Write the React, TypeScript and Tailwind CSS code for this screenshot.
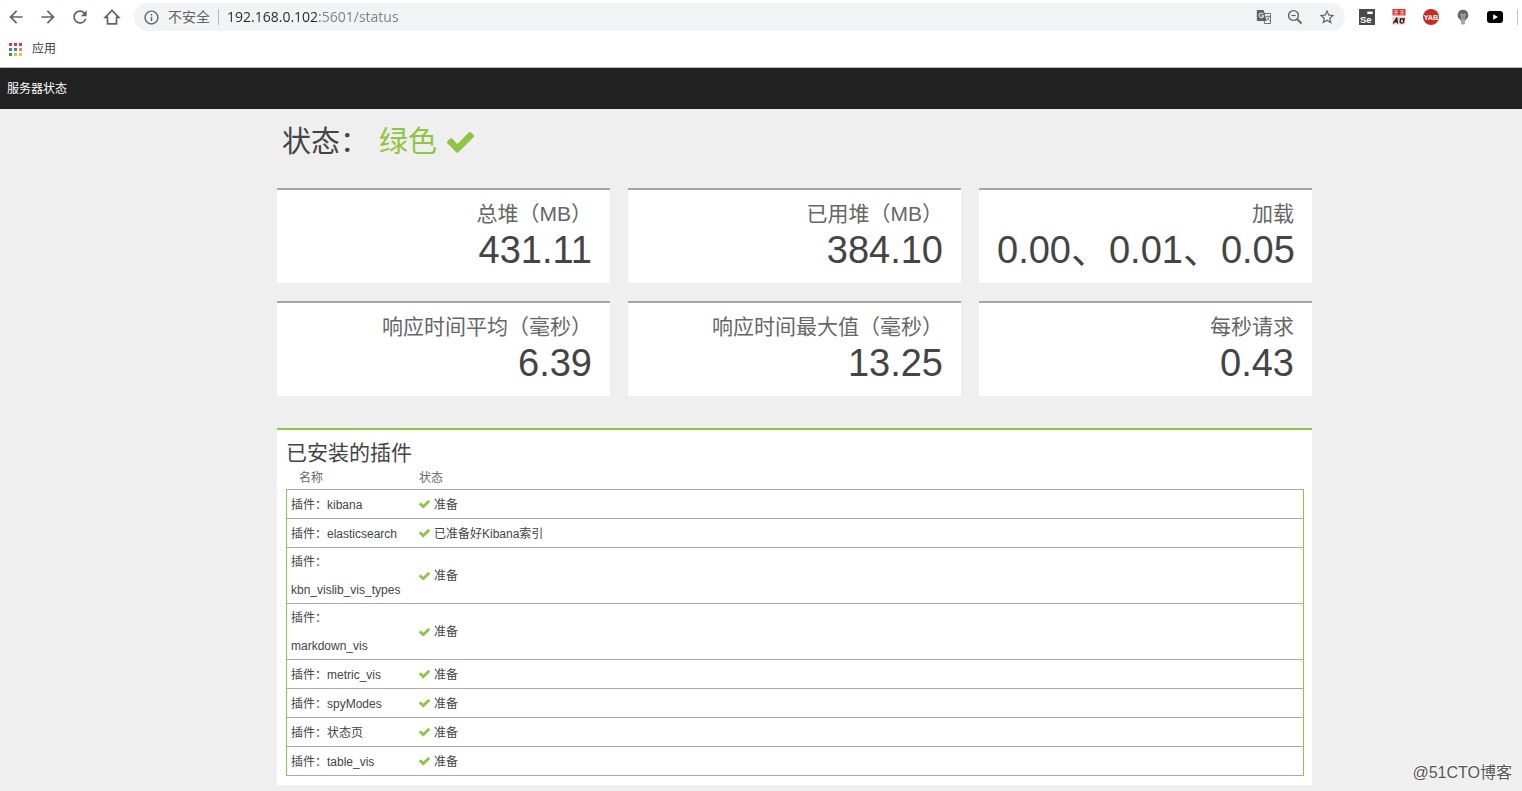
import { useState } from "react";
import { MdArrowBack, MdArrowForward, MdInfoOutline, MdRefresh, MdStarBorder } from "react-icons/md";

const metrics = [
  { label: "总堆（MB）", value: "431.11" },
  { label: "已用堆（MB）", value: "384.10" },
  { label: "加载", value: "0.00、0.01、0.05" },
  { label: "响应时间平均（毫秒）", value: "6.39" },
  { label: "响应时间最大值（毫秒）", value: "13.25" },
  { label: "每秒请求", value: "0.43" },
];

const plugins = [
  { name: "插件：kibana", status: "准备" },
  { name: "插件：elasticsearch", status: "已准备好Kibana索引" },
  { name: "插件：kbn_vislib_vis_types", status: "准备" },
  { name: "插件：markdown_vis", status: "准备" },
  { name: "插件：metric_vis", status: "准备" },
  { name: "插件：spyModes", status: "准备" },
  { name: "插件：状态页", status: "准备" },
  { name: "插件：table_vis", status: "准备" },
];

const appDots = [
  "bg-[#d8354a]", "bg-[#d8354a]", "bg-[#d8354a]",
  "bg-[#2e9e4f]", "bg-[#3b78d8]", "bg-[#e8894a]",
  "bg-[#2e9e4f]", "bg-[#e8b92e]", "bg-[#e8c92e]",
];

function Check({ className }: { className?: string }) {
  return (
    <svg viewBox="121 334 1550 1188" fill="currentColor" aria-hidden="true" className={className}>
      <path d="M1671 566q0 40-28 68l-724 724-136 136q-28 28-68 28t-68-28l-136-136-362-362q-28-28-28-68t28-68l136-136q28-28 68-28t68 28l294 295 656-657q28-28 68-28t68 28l136 136q28 28 28 68z" />
    </svg>
  );
}

function HomeIcon() {
  return (
    <svg viewBox="0 0 20 20" className="size-5" fill="none" stroke="currentColor" strokeWidth="1.7">
      <path d="M3.200 10.300 10 3.400l6.800 6.900h-2.300v6.500h-9v-6.500z" />
    </svg>
  );
}

function TranslateIcon() {
  return (
    <svg viewBox="0 0 16 16" className="size-4">
      <path d="M7.5 4.5h7v10H8.5z" fill="#f4f5f6" stroke="#6b6f73" />
      <path d="M1.5 1h6.2l3 11H1.5A.8.8 0 0 1 .8 11.300V1.800A.8.8 0 0 1 1.500 1z" fill="#5f6368" />
      <path d="M7.300 5.100A2.300 2.300 0 1 0 7.600 6.900H5.400" fill="none" stroke="#e4e6e8" strokeWidth="1.100" />
      <path d="M10 7.500h3.800M11.900 6.300v1.200M13.200 7.500c-.4 1.800-1.300 3-2.700 4M10.900 9l2.600 2.700" fill="none" stroke="#6b6f73" strokeWidth=".9" />
    </svg>
  );
}

function ZoomOutIcon() {
  return (
    <svg viewBox="0 0 16 16" className="size-4" fill="none" stroke="#5f6368">
      <circle cx="6.500" cy="6.500" r="4.900" strokeWidth="1.400" />
      <path d="m10 10 4.500 4.500" strokeWidth="1.800" />
      <path d="M4.300 6.500h4.400" strokeWidth="1.200" />
    </svg>
  );
}

function SeleniumIcon() {
  return (
    <svg viewBox="0 0 16 16" className="size-4">
      <path d="M0 0h16v16H0z" fill="#4a4a4a" />
      <path d="M8.300 2.600h5.400v2.400H8.300z" fill="#fff" />
      <text x="1" y="14" fontSize="9.500" fontWeight="700" fill="#fff" fontFamily="Liberation Sans, sans-serif">Se</text>
    </svg>
  );
}

function AdIcon() {
  return (
    <svg viewBox="0 0 16 16" className="size-4">
      <path d="M1.500 0h13v6.500h-13z" fill="#d9363c" />
      <path d="M3 1.800h4M3 3.500h4M5 1v4.500M3.300 5.200h3.400M9 1.800h4M9 3.500h4M11 1v4.500M9.300 5.200h3.400" stroke="#f6b5b5" strokeWidth=".8" />
      <path d="M1.500 8h13v7.500h-13z" fill="#f3c9c9" />
      <path d="m2.200 14.300 3.500-5 .8 5M3.600 12.600h2.800M8.800 9.800h5.200M10 10.500c-1.500 1.500-1 3.700.8 3.700s2.600-2.200 1.500-4.200" fill="none" stroke="#221b1b" strokeWidth="1.300" />
    </svg>
  );
}

function YabIcon() {
  return (
    <svg viewBox="0 0 16 16" className="size-4">
      <circle cx="8" cy="8" r="8" fill="#cb2a20" />
      <text x="8" y="10.600" textAnchor="middle" fontSize="7.200" fontWeight="700" fill="#fff" fontFamily="Liberation Sans, sans-serif">YAB</text>
    </svg>
  );
}

function BulbIcon() {
  return (
    <svg viewBox="0 0 16 16" className="size-4">
      <path d="M8 .8a5.300 5.300 0 0 0-3.500 9.300c.8.700 1.200 1 1.300 1.700h4.400c.1-.7.5-1 1.300-1.700A5.300 5.300 0 0 0 8 .8z" fill="#666" />
      <path d="M5.800 4.800 7 11h2l1.200-6.200L8 6z" fill="#8c8c8c" stroke="#b5b5b5" strokeWidth=".8" />
      <path d="M6 11.300h4v3l-.8 1.100H6.800l-.8-1.100z" fill="#a8a8a8" />
    </svg>
  );
}

function YoutubeIcon() {
  return (
    <svg viewBox="0 0 16 16" className="size-4">
      <rect y="2" width="16" height="12" rx="3" fill="#000" />
      <path d="M6.200 5.300v5.400L11 8z" fill="#fff" />
    </svg>
  );
}

const extensions = [
  { name: "Selenium", Icon: SeleniumIcon },
  { name: "AD", Icon: AdIcon },
  { name: "YAB", Icon: YabIcon },
  { name: "Bulb", Icon: BulbIcon },
  { name: "YouTube", Icon: YoutubeIcon },
];

function BrowserBar() {
  const [url, setUrl] = useState("192.168.0.102:5601/status");

  return (
    <div className="bg-white border-b border-[#b8b8b8] font-['Open_Sans','Noto_Sans_CJK_SC',sans-serif] text-[#5f6368]">
      <div className="flex items-center h-[34px] pl-1.5 pr-1">
        <div className="flex gap-3">
          <button aria-label="后退"><MdArrowBack size={20} /></button>
          <button aria-label="前进"><MdArrowForward size={20} /></button>
          <button aria-label="重新加载"><MdRefresh size={20} /></button>
          <button aria-label="主页"><HomeIcon /></button>
        </div>
        <div className="flex flex-1 items-center h-7 ml-3 px-[9px] rounded-full bg-[#f1f3f4]">
          <MdInfoOutline size={17} />
          <span className="ml-2 text-sm">不安全</span>
          <span className="w-px h-4 ml-2 bg-[#b4b7ba]" />
          <input aria-label="地址" value={url} onChange={(e) => setUrl(e.target.value)}
            className="flex-1 ml-2 text-sm outline-none text-transparent bg-clip-text bg-[linear-gradient(to_right,#26282b_92px,#7b7f83_92px)]" />
          <div className="flex items-center gap-[15px]">
            <button aria-label="翻译"><TranslateIcon /></button>
            <button aria-label="缩小"><ZoomOutIcon /></button>
            <button aria-label="收藏"><MdStarBorder size={18} /></button>
          </div>
        </div>
        <div className="flex gap-4 ml-3.5">
          {extensions.map(({ name, Icon }) => (
            <button key={name} aria-label={name}><Icon /></button>
          ))}
        </div>
        <span className="w-px h-4 ml-3.5 bg-[#c4c4c4]" />
      </div>
      <div className="flex items-center h-[33px] pb-[3px] pl-[9px]">
        <a href="#apps" className="flex items-center gap-2.5 text-xs text-[#3c4043]">
          <span className="grid grid-cols-3 gap-[2px]">
            {appDots.map((dot, i) => <span key={i} className={`size-[3px] ${dot}`} />)}
          </span>
          应用
        </a>
      </div>
    </div>
  );
}

export default function App() {
  return (
    <div className="relative min-h-screen bg-[#efefef] font-['Liberation_Sans','Noto_Sans_CJK_SC',sans-serif] text-[#444]">
      <BrowserBar />
      <header className="flex items-center h-[41px] px-[7px] bg-[#222] text-xs text-white">服务器状态</header>

      <main className="pl-[277px] pr-[210px] pb-1.5">
        <h1 className="flex items-center h-[79px] pb-3 pl-[5px] text-[29px]">
          状态：
          <span className="flex items-center gap-2.5 ml-2.5 text-[#8fc543]">
            绿色
            <Check className="w-[27px]" />
          </span>
        </h1>

        <section className="grid grid-cols-3 gap-[18px]">
          {metrics.map((m) => (
            <div key={m.label} className="px-[18px] pt-2 pb-[13px] border-t-2 border-[#a6a6a6] bg-white text-right whitespace-nowrap">
              <h2 className="text-[21px] leading-8 text-[#666]">{m.label}</h2>
              <p className="text-[38px] leading-10">{m.value}</p>
            </div>
          ))}
        </section>

        <section className="mt-8 p-[9px] pr-2 border-t-2 border-[#8fc543] bg-white">
          <h2 className="text-[21px] leading-7">已安装的插件</h2>
          <table className="w-full border-separate border-spacing-0 text-xs text-left">
            <thead>
              <tr className="h-[23px] text-[#666]">
                <th className="w-[129px] pl-[13px] border-b border-[#aaa] font-normal">名称</th>
                <th className="pl-1 border-b border-[#aaa] font-normal">状态</th>
              </tr>
            </thead>
            <tbody className="leading-7">
              {plugins.map((p) => (
                <tr key={p.name} className="h-[29px]">
                  <td className="pl-1 pr-[13px] border-l border-[#8fc543] shadow-[inset_0_-1px_0_#aaa]">{p.name}</td>
                  <td className="pl-1 border-r border-[#8fc543] shadow-[inset_0_-1px_0_#aaa]">
                    <span className="flex items-center gap-1">
                      <Check className="w-[11px] text-[#8fc543]" />
                      {p.status}
                    </span>
                  </td>
                </tr>
              ))}
            </tbody>
          </table>
        </section>
      </main>

      <span className="absolute right-2.5 bottom-1.5 text-base text-[#555] [text-shadow:-1px_-1px_0_#fff]">@51CTO博客</span>
    </div>
  );
}
